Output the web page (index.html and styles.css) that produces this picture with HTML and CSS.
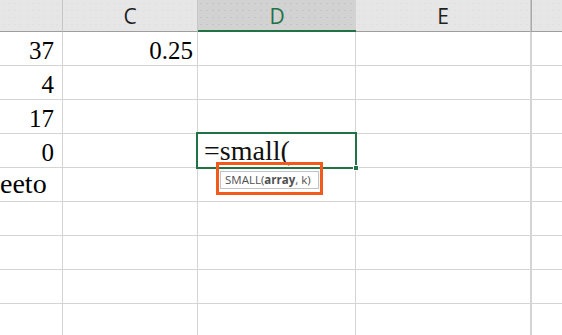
FILE: index.html
```html
<!DOCTYPE html>
<html>
<head>
<meta charset="utf-8">
<link rel="stylesheet" href="styles.css">
</head>
<body>
<div class="sheet">
  <div class="grid">
    <div class="hd"></div>
    <div class="hd">C</div>
    <div class="hd hd-active">D</div>
    <div class="hd">E</div>
    <div class="hd hd-last"></div>

    <div class="c r num">37</div><div class="c r num pc">0.25</div><div class="c"></div><div class="c"></div><div class="c"></div>
    <div class="c r num">4</div><div class="c"></div><div class="c"></div><div class="c"></div><div class="c"></div>
    <div class="c r num">17</div><div class="c"></div><div class="c"></div><div class="c"></div><div class="c"></div>
    <div class="c r num">0</div><div class="c"></div><div class="c edit">=small(</div><div class="c"></div><div class="c"></div>
    <div class="c txt">eeto</div><div class="c"></div><div class="c"></div><div class="c"></div><div class="c"></div>
    <div class="c"></div><div class="c"></div><div class="c"></div><div class="c"></div><div class="c"></div>
    <div class="c"></div><div class="c"></div><div class="c"></div><div class="c"></div><div class="c"></div>
    <div class="c"></div><div class="c"></div><div class="c"></div><div class="c"></div><div class="c"></div>
    <div class="c"></div><div class="c"></div><div class="c"></div><div class="c"></div><div class="c"></div>
  </div>
  <div class="sel"></div>
  <div class="handle"></div>
  <div class="callout"></div>
  <div class="tip">SMALL(<b>array</b>, k)</div>
</div>
</body>
</html>
```
FILE: styles.css
```css
html, body {
  margin: 0;
  padding: 0;
  background: #ffffff;
  overflow: hidden;
}
.sheet {
  position: relative;
  width: 562px;
  height: 335px;
  overflow: hidden;
}
.grid {
  display: grid;
  grid-template-columns: 63px 135px 158px 175px 1fr;
  grid-template-rows: 32px repeat(9, 34px);
}
.hd {
  box-sizing: border-box;
  background-color: #e6e6e6;
  background-image: radial-gradient(circle, #dfdfdf 0.6px, transparent 0.9px);
  background-size: 6px 7px;
  border-right: 1px solid #c6c6c6;
  border-bottom: 1px solid #9e9e9e;
  display: flex;
  align-items: center;
  justify-content: center;
  font-family: "Open Sans", "Noto Sans", sans-serif;
  font-size: 21px;
  color: #1f1f1f;
  padding-top: 1px;
}
.hd-active {
  background-color: #d2d2d2;
  background-image: radial-gradient(circle, #c4c4c4 0.6px, transparent 0.9px);
  border-right: none;
  border-bottom: 2px solid #217346;
  color: #217346;
}
.hd-last {
  border-left: 1px solid #a8a8a8;
  border-right: none;
}
.c {
  box-sizing: border-box;
  border-right: 1px solid #d4d4d4;
  border-bottom: 1px solid #d4d4d4;
  display: flex;
  align-items: flex-end;
  overflow: hidden;
  font-family: "Liberation Serif", serif;
  color: #000;
  white-space: nowrap;
}
.c:nth-child(5n) {
  border-right: none;
  border-left: 1px solid #d4d4d4;
}
.r {
  justify-content: flex-end;
}
.num {
  font-size: 25px;
  line-height: 25px;
  padding: 0 8px 2px 0;
}
.pc {
  padding-right: 4px;
}
.edit {
  font-size: 28px;
  line-height: 28px;
  padding: 0 0 2px 6px;
  color: #111;
}
.txt {
  font-size: 28px;
  line-height: 28px;
  padding: 0 0 3px 0;
}
.sel {
  position: absolute;
  left: 196px;
  top: 132px;
  width: 161px;
  height: 37px;
  box-sizing: border-box;
  border: 2px solid #217346;
}
.handle {
  position: absolute;
  left: 353px;
  top: 165px;
  width: 6px;
  height: 6px;
  box-sizing: border-box;
  background: #217346;
  border: 1px solid #ffffff;
}
.callout {
  position: absolute;
  left: 216px;
  top: 162px;
  width: 107px;
  height: 33px;
  box-sizing: border-box;
  border: 3px solid #f25a1c;
}
.tip {
  position: absolute;
  left: 220px;
  top: 171px;
  width: 99px;
  height: 18px;
  box-sizing: border-box;
  border: 1px solid #c2c2c2;
  background: #ffffff;
  font-family: "Open Sans", "Noto Sans", sans-serif;
  font-size: 11.5px;
  line-height: 16px;
  color: #505050;
  padding-left: 4px;
  white-space: nowrap;
}
.tip b {
  font-weight: 700;
}
```
